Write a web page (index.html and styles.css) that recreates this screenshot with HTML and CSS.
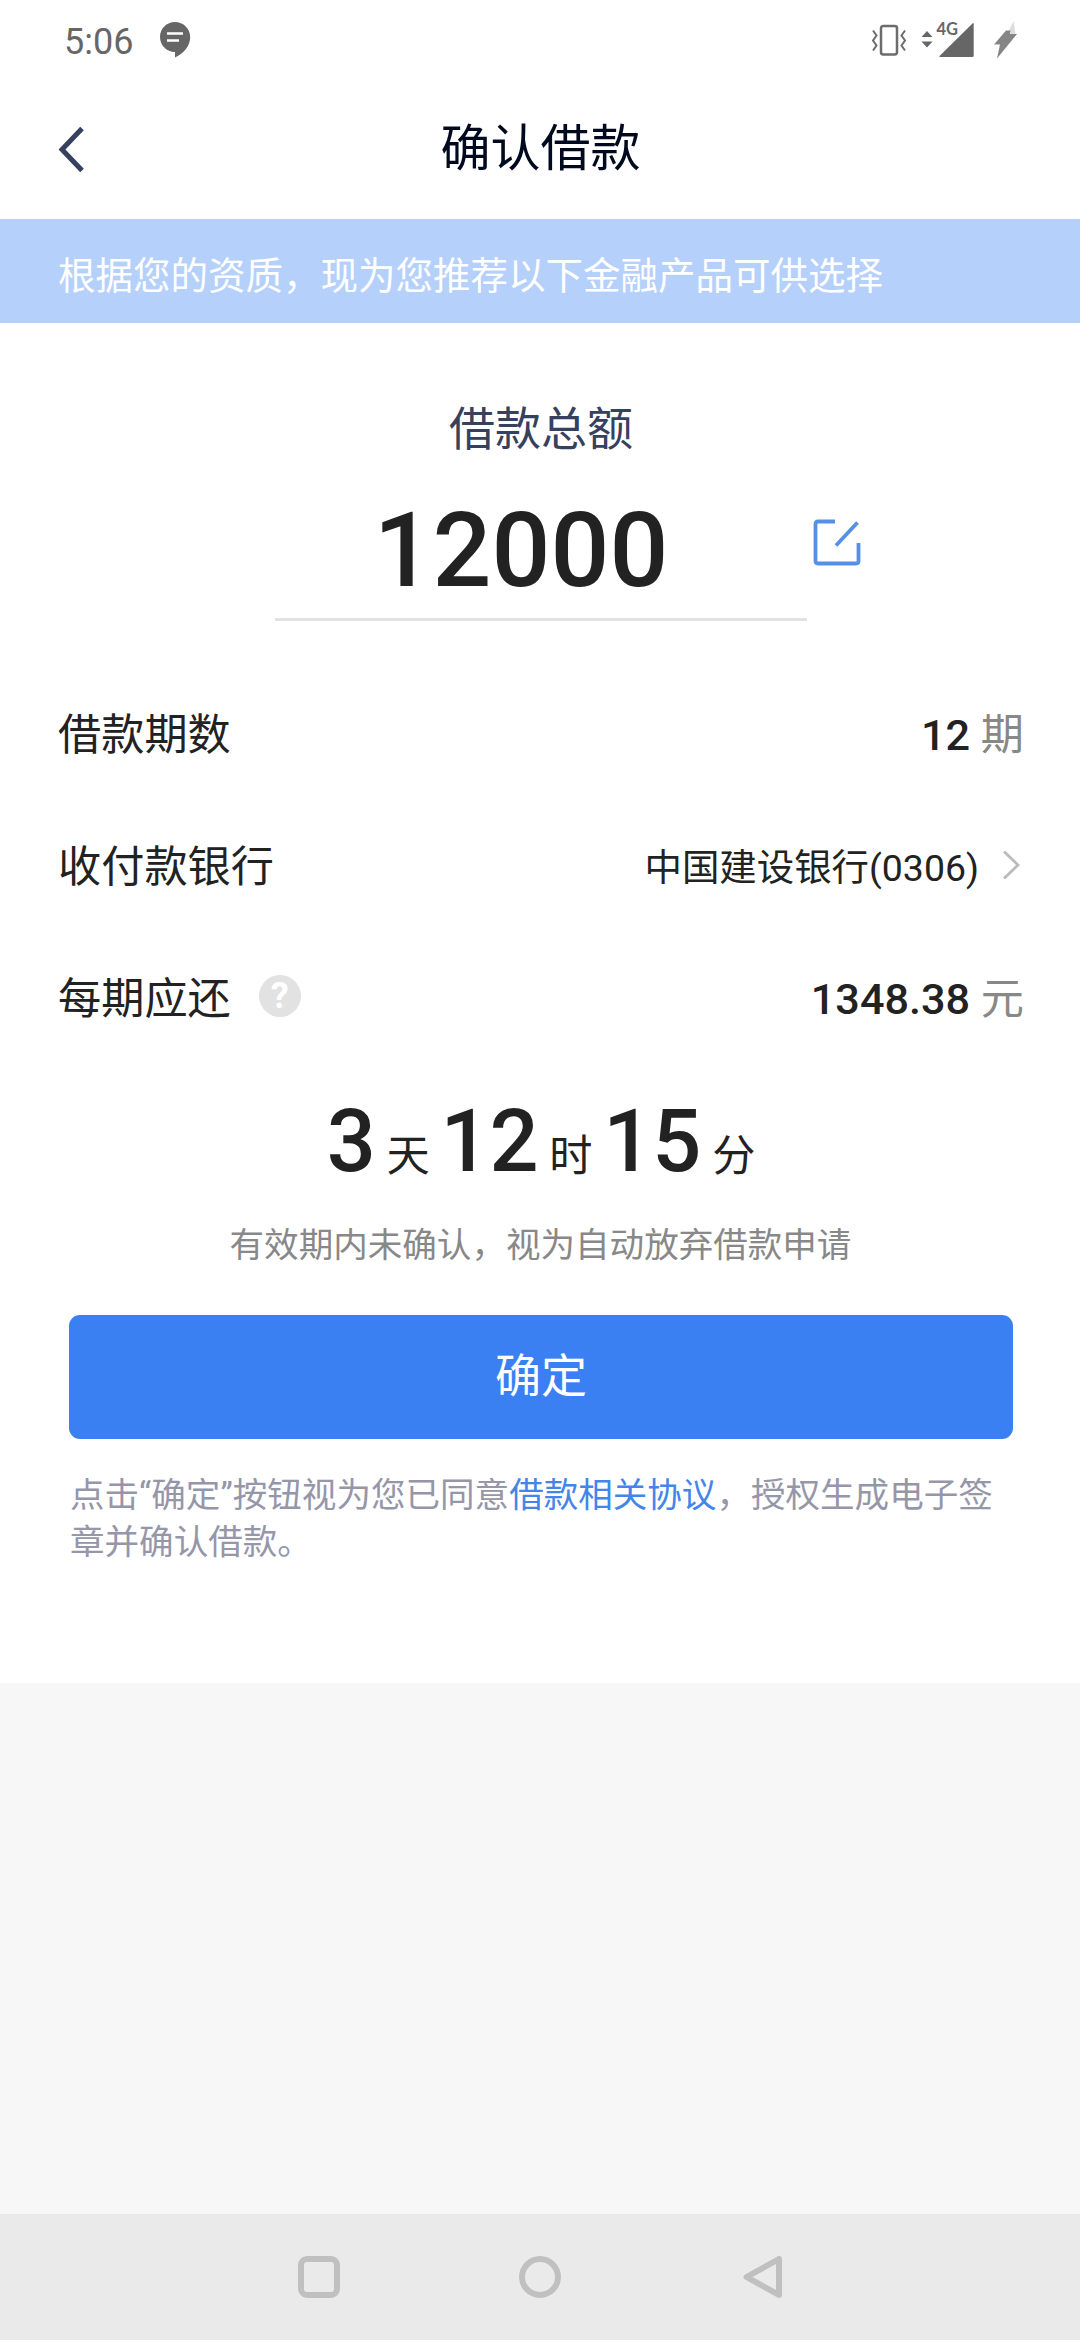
FILE: index.html
```html
<!DOCTYPE html>
<html lang="zh-CN">
<head>
<meta charset="utf-8">
<title>确认借款</title>
<link rel="stylesheet" href="styles.css">
</head>
<body>
<div class="screen">
  <div class="status">
    <div class="status-side">
      <span class="clock">5:06</span>
      <svg class="chat" width="32" height="38" viewBox="0 0 32 38">
        <path d="M16 1C7.500 1 1 7.700 1 16s6.500 15 15 15v5.500C25 32.500 31.200 24.500 31.200 16.200 31.200 7.700 24.500 1 16 1z" fill="#666"/>
        <path d="M8 12.500h16M8 19.500h12" stroke="#fff" stroke-width="2.500"/>
      </svg>
    </div>
    <div class="status-side">
      <svg width="150" height="40" viewBox="0 0 150 40">
        <g fill="none" stroke="#6c6c6c" stroke-width="2">
          <rect x="10" y="5" width="16" height="28.500" rx="2.200" stroke-width="2.500"/>
          <path d="M2 9.500l3.500 5-3.500 5 3.500 5-3.500 5M34 9.500l-3.500 5 3.500 5-3.500 5 3.500 5"/>
        </g>
        <path d="M50.500 16l5.500-6 5.500 6zM50.500 20.500l5.500 6 5.500-6z" fill="#666"/>
        <path d="M101.500 2.500Q102.700 1.500 102.700 3v31.500q0 1.500-1.500 1.500H69.500Q67.500 36 69 34.500z" fill="#666"/>
        <text x="65.500" y="13.700" class="net">4G</text>
        <path d="M142.500 0l-5 10.500 2.500.5-.5 2h5z" fill="#ddd"/>
        <path d="M135 9.500h4.500l-.5 3.500h7L126 37.500l3-14h-6z" fill="#858585"/>
      </svg>
    </div>
  </div>

  <header class="header">
    <svg class="back" width="28" height="48" viewBox="0 0 28 48"><path d="M24 2.500L4 23.500l20 21" fill="none" stroke="#36405f" stroke-width="5"/></svg>
    <h1 class="title">确认借款</h1>
  </header>

  <main class="card">
    <p class="banner">根据您的资质，现为您推荐以下金融产品可供选择</p>
    <div class="total-label">借款总额</div>
    <div class="amount-row">
      <div class="amount">12000</div>
      <svg class="edit" width="48" height="48" viewBox="0 0 48 48"><path d="M22 2.500H5q-2.500 0-2.500 2.500v37q0 2.500 2.500 2.500h38q2.500 0 2.500-2.500V24M23 26.500L44.500 3.500" fill="none" stroke="#5590e8" stroke-width="3.800"/></svg>
    </div>

    <div class="rows">
      <div class="row">
        <span class="label">借款期数</span>
        <span class="value"><b>12</b> 期</span>
      </div>
      <div class="row">
        <span class="label">收付款银行</span>
        <span class="bank">中国建设银行(0306)<svg class="chevron" width="20" height="30" viewBox="0 0 20 30"><path d="M2 1.500L16 15 2 28.500" fill="none" stroke="#bbb" stroke-width="2.800"/></svg></span>
      </div>
      <div class="row">
        <span class="label">每期应还<span class="help">?</span></span>
        <span class="value"><b>1348.38</b> 元</span>
      </div>
    </div>

    <div class="countdown"><b>3</b> 天 <b>12</b> 时 <b>15</b> 分</div>
    <p class="hint">有效期内未确认，视为自动放弃借款申请</p>
    <button class="confirm" type="button">确定</button>
    <p class="legal">点击“确定”按钮视为您已同意<a class="link">借款相关协议</a>，授权生成电子签章并确认借款。</p>
  </main>

  <nav class="nav">
    <svg width="484" height="44" viewBox="0 0 484 44">
      <g fill="none" stroke="#c0c0c0" stroke-width="6" stroke-linejoin="round">
        <rect x="3" y="4" width="36" height="36" rx="6"/>
        <circle cx="242" cy="22" r="18"/>
        <path d="M448.500 22L481 4v36z"/>
      </g>
    </svg>
  </nav>
</div>
</body>
</html>
```
FILE: styles.css
```css
* { box-sizing: border-box; }

body {
  margin: 0;
  background: #f7f7f7;
  color: #222;
  font-family: Roboto, "Noto Sans CJK SC", sans-serif;
}

p, h1 { margin: 0; font-weight: 400; }
svg { display: block; }
b { font-weight: 500; }

.screen {
  display: flex;
  flex-direction: column;
  width: 1080px;
  height: 2340px;
}

.status {
  display: flex;
  justify-content: space-between;
  height: 80px;
  padding: 21px 59px 0 64px;
  background: #fff;
}
.status-side { display: flex; align-items: flex-start; }
.clock { color: #666; font-size: 36px; line-height: 43px; }
.chat { margin-left: 26px; }
.net { font: 700 16.500px Lato, sans-serif; fill: #666; }

.header {
  display: grid;
  grid-template-columns: 86px 1fr 86px;
  align-items: center;
  height: 139px;
  background: #fff;
}
.back { margin-left: 58px; }
.title {
  padding: 0 0 2px 1px;
  color: #000a1e;
  font-size: 50px;
  line-height: 60px;
  text-align: center;
}

.card { height: 1464px; background: #fff; }

.banner {
  height: 104px;
  padding: 11px 57px 0 58px;
  background: #b5d0fb;
  color: #fff;
  font-size: 37.500px;
  line-height: 93px;
}

.total-label {
  margin-top: 76px;
  padding-left: 2px;
  color: #36405f;
  font-size: 46px;
  line-height: 60px;
  text-align: center;
}
.amount-row { display: flex; gap: 6px; margin-top: 32px; padding-left: 275px; }
.amount {
  width: 532px;
  height: 130px;
  padding-right: 40px;
  border-bottom: 3px solid #e2e2e2;
  font-size: 103.680px;
  font-weight: 500;
  line-height: 120px;
  text-align: center;
}
.edit { margin-top: 28px; }

.rows { margin-top: 49px; padding: 0 56px 0 58px; }
.row {
  display: flex;
  align-items: center;
  justify-content: space-between;
  height: 132px;
  font-size: 43.200px;
  line-height: 60px;
}
.label { display: flex; align-items: center; }
.value { color: #888; }
.value b { color: #222; }
.bank { display: flex; align-items: center; font-size: 37.440px; }
.chevron { margin: -6px 2px 0 23px; }
.help {
  width: 42px;
  height: 42px;
  margin: -8px 0 0 28px;
  border-radius: 50%;
  background: #e2e2e2;
  color: #fff;
  font-size: 36px;
  font-weight: 700;
  line-height: 42px;
  text-align: center;
}

.countdown {
  height: 100px;
  margin-top: 26px;
  padding-left: 2px;
  font-size: 43.200px;
  line-height: 100px;
  text-align: center;
}
.countdown b { font-size: 86.400px; }
.hint {
  margin-top: 28px;
  padding-left: 1px;
  color: #888;
  font-size: 34.560px;
  line-height: 50px;
  text-align: center;
}

.confirm {
  display: block;
  width: 944px;
  height: 124px;
  margin: 45px 0 0 69px;
  padding: 0 0 2px;
  border: 0;
  border-radius: 11px;
  background: #3a80f3;
  color: #fff;
  font: inherit;
  font-size: 46px;
  line-height: 60px;
}
.legal {
  margin-top: 33px;
  padding: 0 66px 0 70px;
  color: #9696a9;
  font-size: 34.560px;
  line-height: 46.700px;
}
.link { color: #4385e8; }

.nav {
  display: flex;
  justify-content: center;
  height: 126px;
  margin-top: auto;
  padding-top: 41px;
  background: #eaeaea;
}
```
